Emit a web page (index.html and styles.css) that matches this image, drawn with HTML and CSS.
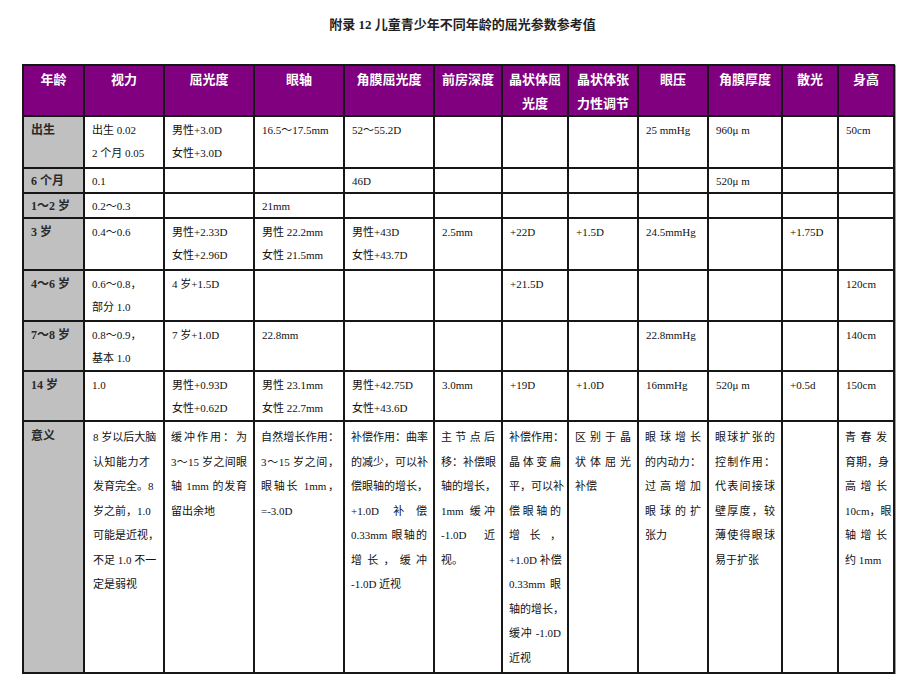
FILE: index.html
```html
<!DOCTYPE html>
<html lang="zh">
<head>
<meta charset="utf-8">
<link rel="stylesheet" href="styles.css">
</head>
<body>
<div class="page">
  <div class="title">附录 12 儿童青少年不同年龄的屈光参数参考值</div>
  <table class="grid">
    <colgroup>
      <col class="w1"><col class="w2"><col class="w3"><col class="w3"><col class="w3"><col class="w6">
      <col class="w7"><col class="w8"><col class="w8"><col class="w10"><col class="w11"><col class="w11">
    </colgroup>
    <tr class="head">
      <th>年龄</th><th>视力</th><th>屈光度</th><th>眼轴</th><th>角膜屈光度</th><th>前房深度</th>
      <th>晶状体屈<br>光度</th><th>晶状体张<br>力性调节</th><th>眼压</th><th>角膜厚度</th><th>散光</th><th>身高</th>
    </tr>
    <tr class="h52">
      <td class="age">出生</td><td>出生 0.02<br>2 个月 0.05</td><td>男性+3.0D<br>女性+3.0D</td><td>16.5～17.5mm</td><td>52～55.2D</td>
      <td></td><td></td><td></td><td>25 mmHg</td><td>960μ m</td><td></td><td>50cm</td>
    </tr>
    <tr class="h25">
      <td class="age">6 个月</td><td>0.1</td><td></td><td></td><td>46D</td>
      <td></td><td></td><td></td><td></td><td>520μ m</td><td></td><td></td>
    </tr>
    <tr class="h25">
      <td class="age">1～2 岁</td><td>0.2～0.3</td><td></td><td>21mm</td><td></td>
      <td></td><td></td><td></td><td></td><td></td><td></td><td></td>
    </tr>
    <tr class="h52">
      <td class="age">3 岁</td><td>0.4～0.6</td><td>男性+2.33D<br>女性+2.96D</td><td>男性 22.2mm<br>女性 21.5mm</td><td>男性+43D<br>女性+43.7D</td>
      <td>2.5mm</td><td>+22D</td><td>+1.5D</td><td>24.5mmHg</td><td></td><td>+1.75D</td><td></td>
    </tr>
    <tr class="h51">
      <td class="age">4～6 岁</td><td>0.6～0.8，<br>部分 1.0</td><td>4 岁+1.5D</td><td></td><td></td>
      <td></td><td>+21.5D</td><td></td><td></td><td></td><td></td><td>120cm</td>
    </tr>
    <tr class="h50">
      <td class="age">7～8 岁</td><td>0.8～0.9，<br>基本 1.0</td><td>7 岁+1.0D</td><td>22.8mm</td><td></td>
      <td></td><td></td><td></td><td>22.8mmHg</td><td></td><td></td><td>140cm</td>
    </tr>
    <tr class="h50">
      <td class="age">14 岁</td><td>1.0</td><td>男性+0.93D<br>女性+0.62D</td><td>男性 23.1mm<br>女性 22.7mm</td><td>男性+42.75D<br>女性+43.6D</td>
      <td>3.0mm</td><td>+19D</td><td>+1.0D</td><td>16mmHg</td><td>520μ m</td><td>+0.5d</td><td>150cm</td>
    </tr>
    <tr class="mean">
      <td class="age">意义</td>
      <td class="wide-pad">
        <div class="l j">8 岁以后大脑</div><div class="l j">认知能力才</div><div class="l j">发育完全。8</div>
        <div class="l j">岁之前，1.0</div><div class="l j">可能是近视，</div><div class="l j">不足 1.0 不一</div><div class="l">定是弱视</div>
      </td>
      <td>
        <div class="l j">缓冲作用：为</div><div class="l j">3～15 岁之间眼</div><div class="l j">轴 1mm 的发育</div><div class="l">留出余地</div>
      </td>
      <td class="tight">
        <div class="l j">自然增长作用：</div><div class="l j">3～15 岁之间，</div><div class="l j">眼轴长 1mm，</div><div class="l">=-3.0D</div>
      </td>
      <td>
        <div class="l j">补偿作用：曲率</div><div class="l j">的减少，可以补</div><div class="l j">偿眼轴的增长，</div>
        <div class="l j">+1.0D 补偿</div><div class="l j">0.33mm 眼轴的</div><div class="l j">增长，缓冲</div><div class="l">-1.0D 近视</div>
      </td>
      <td>
        <div class="l j">主节点后</div><div class="l j">移：补偿眼</div><div class="l j">轴的增长，</div>
        <div class="l j">1mm 缓冲</div><div class="l j">-1.0D 近</div><div class="l">视。</div>
      </td>
      <td>
        <div class="l">补偿作用：</div><div class="l j">晶体变扁</div><div class="l j">平，可以补</div><div class="l j">偿眼轴的</div>
        <div class="l j">增长，</div><div class="l j">+1.0D 补偿</div><div class="l j">0.33mm 眼</div><div class="l j">轴的增长，</div>
        <div class="l j">缓冲 -1.0D</div><div class="l">近视</div>
      </td>
      <td>
        <div class="l j">区别于晶</div><div class="l j">状体屈光</div><div class="l">补偿</div>
      </td>
      <td>
        <div class="l j">眼球增长</div><div class="l j">的内动力：</div><div class="l j">过高增加</div><div class="l j">眼球的扩</div><div class="l">张力</div>
      </td>
      <td>
        <div class="l j">眼球扩张的</div><div class="l j">控制作用：</div><div class="l j">代表间接球</div>
        <div class="l j">壁厚度，较</div><div class="l j">薄使得眼球</div><div class="l">易于扩张</div>
      </td>
      <td></td>
      <td>
        <div class="l j">青春发</div><div class="l j">育期，身</div><div class="l j">高增长</div>
        <div class="l j">10cm，眼</div><div class="l j">轴增长</div><div class="l">约 1mm</div>
      </td>
    </tr>
  </table>
</div>
</body>
</html>
```

FILE: styles.css
```css
body {
  margin: 0;
  background: #ffffff;
  color: #111111;
  font-family: "Liberation Serif", "Noto Sans CJK SC", serif;
}

.page {
  padding: 17px 0 0 22px;
}

.title {
  width: 871px;
  box-sizing: border-box;
  padding-left: 10px;
  text-align: center;
  font-size: 13px;
  line-height: 16px;
  font-weight: bold;
  color: #222;
  margin-bottom: 31px;
}

.grid {
  border-collapse: collapse;
  table-layout: fixed;
  width: 871px;
  box-shadow: 1px 1px 0 #9a9a9a;
}

.w1 { width: 61px; }
.w2 { width: 80px; }
.w3 { width: 90px; }
.w6 { width: 68px; }
.w7 { width: 66px; }
.w8 { width: 70px; }
.w10 { width: 74px; }
.w11 { width: 56px; }

.grid th,
.grid td {
  border: 2px solid #161616;
  vertical-align: top;
  text-align: left;
  padding: 2px 6px 0 7px;
  font-size: 11px;
  line-height: 23px;
}

.head {
  height: 51px;
}

.grid th {
  background: #800080;
  color: #ffffff;
  font-weight: bold;
  font-size: 13px;
  line-height: 23.5px;
  text-align: center;
  padding: 2px 2px 0 2px;
}

.grid td.age {
  background: #c0c0c0;
  font-weight: bold;
  font-size: 12px;
  color: #2a2a2a;
}

.h25 { height: 25px; }
.h50 { height: 50px; }
.h51 { height: 51px; }
.h52 { height: 52px; }

.h25 td {
  line-height: 21px;
}

.mean {
  height: 252px;
}

.mean td {
  line-height: 24.5px;
  padding: 3px 6px 0 6px;
}

.mean td.age {
  line-height: 23px;
  padding-left: 7px;
}

.mean td.wide-pad {
  padding-left: 8px;
  padding-right: 13px;
}

.mean td.tight {
  padding-right: 4px;
}

.l {
  white-space: nowrap;
}

.j {
  text-align: justify;
  text-align-last: justify;
}
```
